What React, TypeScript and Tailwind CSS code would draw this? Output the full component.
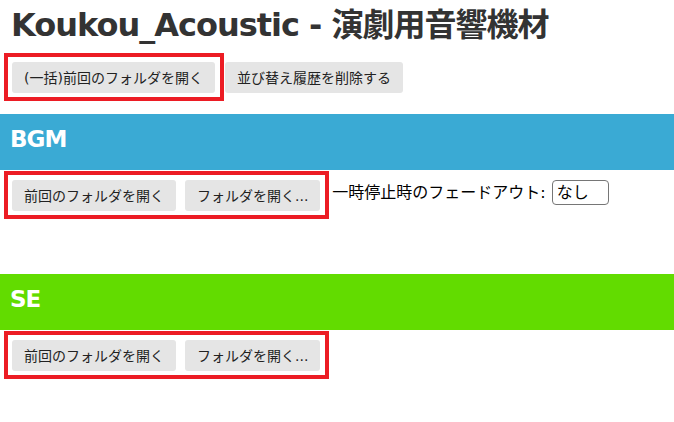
const font = {
  fontFamily: '"DejaVu Sans", "Noto Sans CJK JP", sans-serif',
};

function Btn({ children }: { children: React.ReactNode }) {
  return (
    <button className="h-[31px] px-[12px] rounded-[3px] bg-[#e5e5e5] text-[14px] text-[#222] leading-none whitespace-nowrap">
      {children}
    </button>
  );
}

function Section({
  title,
  color,
  fade,
}: {
  title: string;
  color: string;
  fade?: boolean;
}) {
  return (
    <section>
      <div className={`h-[56px] flex items-center pl-[10px] pb-[5px] ${color}`}>
        <h2 className="text-[23px] font-bold text-white leading-none tracking-[-1px]">{title}</h2>
      </div>
      <div className="flex items-start pt-[1px] pl-1">
        <div className="flex gap-[9px] border-4 border-[#ec1c24] pl-1 pr-[5px] pt-[5px] pb-1">
          <Btn>前回のフォルダを開く</Btn>
          <Btn>フォルダを開く...</Btn>
        </div>
        {fade && (
          <div className="flex items-center ml-[3px] mt-[9px] text-[16px] text-black">
            <span>一時停止時のフェードアウト:</span>
            <div className="ml-[6px] w-[57px] h-[25px] border border-[#767676] rounded-[4px] flex items-center pl-[4px] text-[16px]">
              なし
            </div>
          </div>
        )}
      </div>
    </section>
  );
}

export default function App() {
  return (
    <div style={font} className="w-[674px] h-[422px] bg-white overflow-hidden">
      <h1 className="pl-[11px] pt-[5px] text-[32px] font-bold text-[#333] leading-[40px] tracking-[-1px]">
        Koukou_Acoustic - 演劇用音響機材
      </h1>

      {/* top buttons */}
      <div className="flex items-start gap-[1px] pl-1 mt-[8px]">
        <div className="border-4 border-[#ec1c24] pl-1 pr-[5px] pt-[5px] pb-1">
          <Btn>(一括)前回のフォルダを開く</Btn>
        </div>
        <div className="pt-[9px]">
          <Btn>並び替え履歴を削除する</Btn>
        </div>
      </div>

      <div className="mt-[13px]">
        <Section title="BGM" color="bg-[#3aaad4]" fade />
      </div>
      <div className="mt-[55px]">
        <Section title="SE" color="bg-[#62dc00]" />
      </div>
    </div>
  );
}
